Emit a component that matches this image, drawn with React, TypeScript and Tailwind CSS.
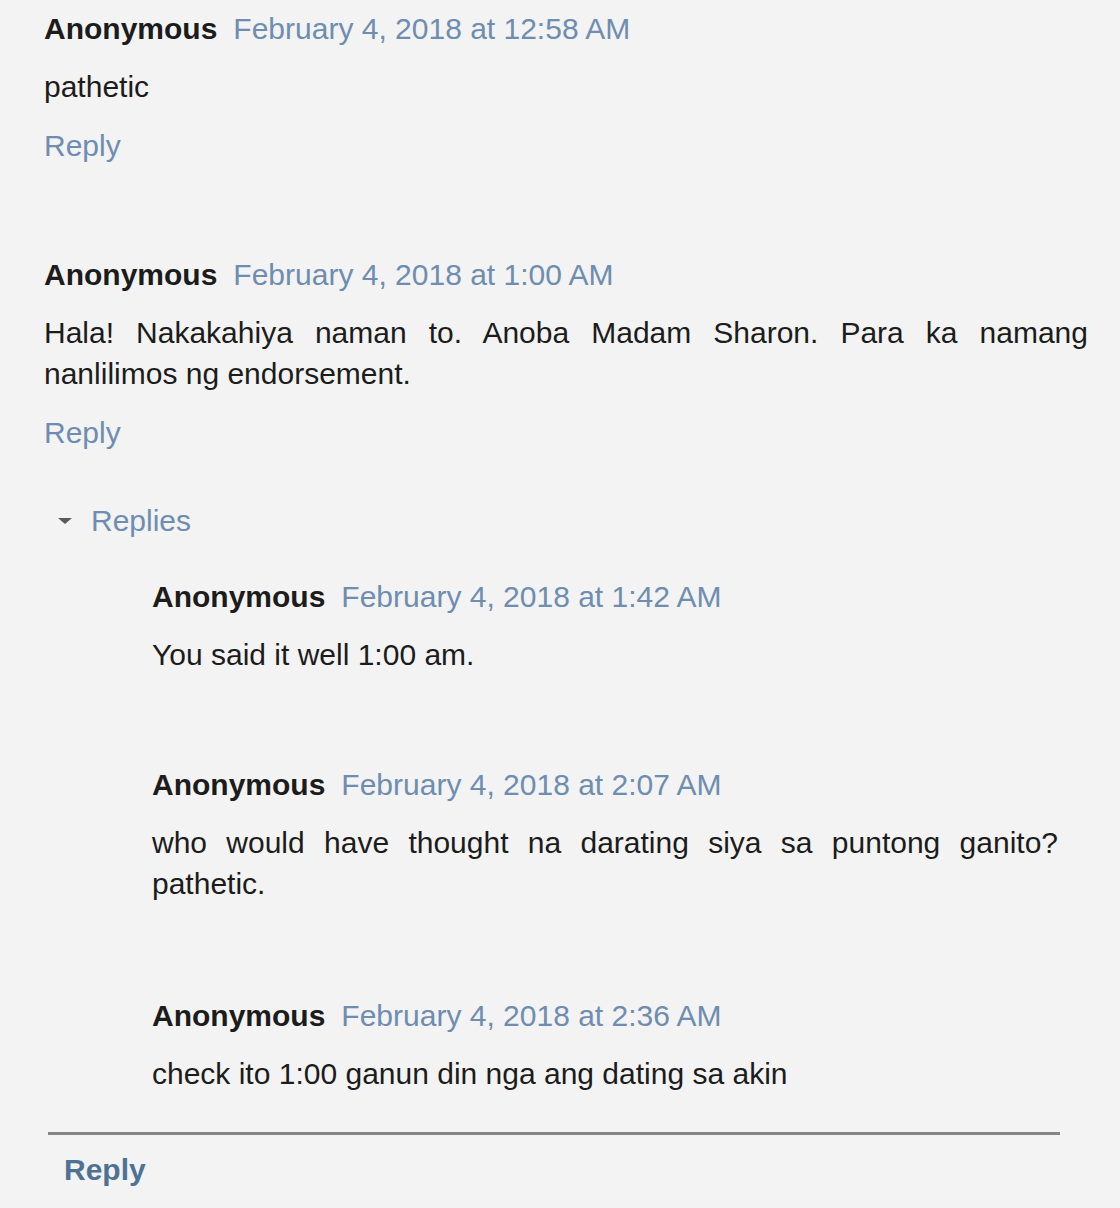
import React from "react";

const font = { fontFamily: '"Liberation Sans", Arial, sans-serif' };

function Header({ date }: { date: string }) {
  return (
    <div className="flex h-[41px] items-center whitespace-nowrap leading-[41px]">
      <span className="font-bold text-[#1c1c1c]">Anonymous</span>
      <span className="ml-[16px] text-[#6e8db0]">{date}</span>
    </div>
  );
}

export default function App() {
  return (
    <div
      className="min-h-[1208px] w-[1120px] overflow-hidden bg-[#f3f3f3] text-[30px] text-[#1c1c1c]"
      style={font}
    >
      <div className="pl-[44px] pr-[32px] pt-[8px]">
        {/* Comment 1 */}
        <Header date="February 4, 2018 at 12:58 AM" />
        <p className="mt-[17px] leading-[41px]">pathetic</p>
        <div className="mt-[18px] leading-[41px] text-[#6e8db0]">Reply</div>

        {/* Comment 2 */}
        <div className="mt-[88px]">
          <Header date="February 4, 2018 at 1:00 AM" />
          <p className="mt-[17px] text-justify leading-[41px]">
            Hala! Nakakahiya naman to. Anoba Madam Sharon. Para ka namang nanlilimos ng endorsement.
          </p>
          <div className="mt-[18px] leading-[41px] text-[#6e8db0]">Reply</div>
        </div>
      </div>

      {/* Replies thread */}
      <div className="ml-[48px] w-[1012px]">
        <div className="mt-[47px] flex h-[41px] items-center leading-[41px]">
          <svg width="16" height="10" viewBox="0 0 16 10" className="ml-[9px]">
            <polygon points="1,2 15,2 8,8" fill="#5a5a5a" />
          </svg>
          <span className="ml-[18px] text-[#6e8db0]">Replies</span>
        </div>

        <div className="ml-[104px] mr-[2px]">
          <div className="mt-[35px]">
            <Header date="February 4, 2018 at 1:42 AM" />
            <p className="mt-[17px] leading-[41px]">You said it well 1:00 am.</p>
          </div>

          <div className="mt-[89px]">
            <Header date="February 4, 2018 at 2:07 AM" />
            <p className="mt-[17px] text-justify leading-[41px]">
              who would have thought na darating siya sa puntong ganito? pathetic.
            </p>
          </div>

          <div className="mt-[91px]">
            <Header date="February 4, 2018 at 2:36 AM" />
            <p className="mt-[17px] leading-[41px]">check ito 1:00 ganun din nga ang dating sa akin</p>
          </div>
        </div>

        <div className="mt-[38px] h-[3px] bg-[#858585]" />
        <div className="ml-[16px] mt-[14px] font-bold leading-[41px] text-[#4f7294]">Reply</div>
      </div>
    </div>
  );
}
